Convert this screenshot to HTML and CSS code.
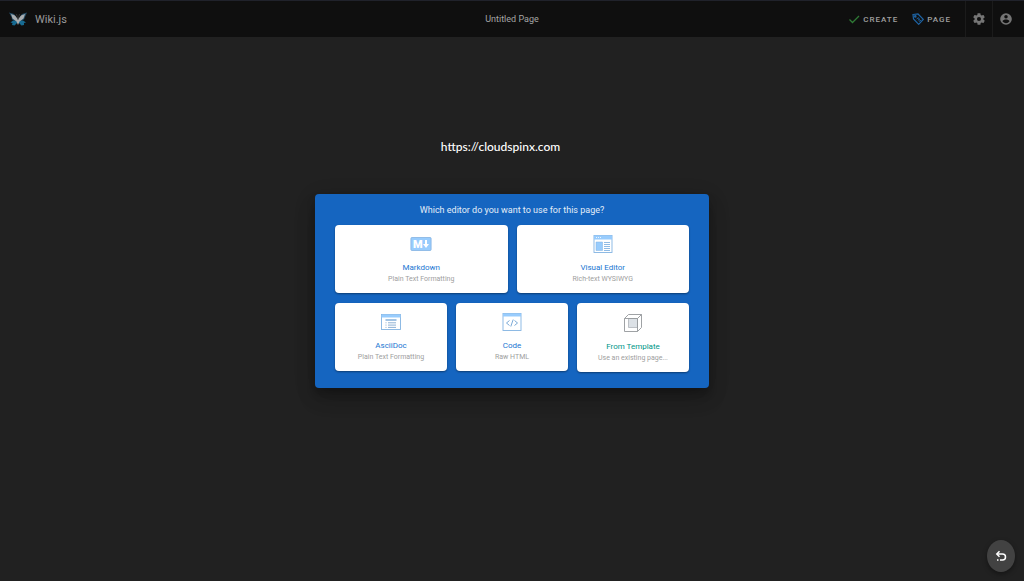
FILE: index.html
```
<!DOCTYPE html>
<html lang="en">
<head>
<meta charset="utf-8">
<meta name="viewport" content="width=device-width, initial-scale=1">
<title>Untitled Page | Wiki.js</title>
<link rel="stylesheet" href="styles.css">
</head>
<body>
<header class="topbar">
  <a class="brand" href="#">
    <svg class="brand-logo" viewBox="0 0 18 16" aria-hidden="true">
      <path fill="#176a91" d="M8.500 9 4 9.500 1.500 11.500 3.500 12 3 14 5.500 14.500 8 12zM9.500 9 14 9.500 17 11.500 15 12 15 14 12.500 14.500 10 12z"/>
      <path fill="#27506a" d="M0 1.500 5 3 8.500 8 7 10 3 8.500 2.500 6zM18 1.500 13 3 9.500 8 11 10 15 8.500 16 6z"/>
      <path fill="#a9adb0" d="M2 3 6 4.500 9 8.500 12 4.500 16 3 14.500 7.500 10.500 10.500 9 14 7.500 10.500 3.500 7.500z"/>
      <path fill="none" stroke="#555" stroke-width=".5" d="M9 9 7.500 3M9 9l1.500-6"/>
    </svg>
    <span>Wiki.js</span>
  </a>
  <h1 class="page-title">Untitled Page</h1>
  <nav class="actions" aria-label="Page actions">
    <button class="action" type="button">
      <svg class="icon-check" viewBox="0 0 12 12" aria-hidden="true"><path d="M1.500 6.500 4.500 9.500 11 3" fill="none" stroke="#2f7a36" stroke-width="1.300"/></svg>
      <span>Create</span>
    </button>
    <button class="action" type="button">
      <svg class="icon-tag" viewBox="0 0 12 12" fill="none" stroke="#1e64a5" stroke-width="1.200" aria-hidden="true"><path d="M1 1.500 6 1l5.300 5.300-4.600 5L1.500 6z"/><circle cx="3.300" cy="3.400" r=".7"/><path stroke-width=".9" d="m4.500 6.300 2-2M5.800 7.600l2.100-2M7 8.800l2-2M5.500 4.900l3 3"/></svg>
      <span>Page</span>
    </button>
    <button class="square square-first" type="button" aria-label="Administration">
      <svg class="icon-round" viewBox="0 0 24 24" fill="#757575" aria-hidden="true"><path d="M12 15.500A3.500 3.500 0 0 1 8.500 12 3.500 3.500 0 0 1 12 8.500a3.500 3.500 0 0 1 3.500 3.500 3.500 3.500 0 0 1-3.500 3.500m7.430-2.530c.04-.32.07-.64.07-.97s-.03-.66-.07-1l2.110-1.630c.19-.15.24-.42.12-.64l-2-3.460c-.12-.22-.39-.31-.61-.22l-2.490 1c-.52-.39-1.060-.73-1.690-.98l-.37-2.650A.506.506 0 0 0 14 2h-4c-.25 0-.46.18-.5.420l-.37 2.650c-.63.250-1.170.590-1.690.980l-2.490-1c-.22-.09-.49 0-.61.220l-2 3.460c-.13.220-.07.490.12.640L4.570 11c-.04.340-.07.670-.07 1s.03.650.07.970l-2.110 1.660c-.19.150-.25.420-.12.640l2 3.460c.12.220.39.300.61.220l2.490-1.010c.52.400 1.060.740 1.690.990l.37 2.650c.04.240.25.420.5.420h4c.25 0 .46-.18.5-.42l.37-2.650c.63-.26 1.170-.59 1.690-.99l2.490 1.010c.22.080.49 0 .61-.22l2-3.460c.12-.22.07-.49-.12-.64z"/></svg>
    </button>
    <button class="square" type="button" aria-label="Account">
      <svg class="icon-round" viewBox="0 0 24 24" fill="#757575" aria-hidden="true"><path d="M12 19.200c-2.500 0-4.710-1.280-6-3.200.03-2 4-3.100 6-3.100s5.970 1.100 6 3.100a7.232 7.232 0 0 1-6 3.200M12 5a3 3 0 0 1 3 3 3 3 0 0 1-3 3 3 3 0 0 1-3-3 3 3 0 0 1 3-3m0-3A10 10 0 0 0 2 12a10 10 0 0 0 10 10 10 10 0 0 0 10-10A10 10 0 0 0 12 2z"/></svg>
    </button>
  </nav>
</header>
<main class="stage">
  <p class="watermark">https://cloudspinx.com</p>
  <section class="dialog" role="dialog" aria-labelledby="dialog-title">
    <h2 class="dialog-title" id="dialog-title">Which editor do you want to use for this page?</h2>
    <div class="row">
      <button class="card" type="button">
        <svg class="card-icon" viewBox="0 0 22 20" aria-hidden="true"><rect x=".9" y="3.500" width="20.200" height="13" rx="1" fill="#98ccfd" stroke="#83b3e2" stroke-width=".8"/><text class="md-letter" x="3" y="14">M</text><path fill="#fff" d="M15 6h2v4h2l-3 4-3-4h2z"/></svg>
        <span class="card-name">Markdown</span>
        <span class="card-note">Plain Text Formatting</span>
      </button>
      <button class="card" type="button">
        <svg class="card-icon" viewBox="0 0 22 20" aria-hidden="true"><rect x="2" y="1.500" width="18" height="17" fill="#fff" stroke="#83b3e2" stroke-width=".9"/><path fill="#98ccfd" d="M2 1.500h18v4H2zM4 8h6.500v8.500H4z"/><path stroke="#fff" stroke-width=".8" d="M4 3.500h1M6 3.500h1M8 3.500h1"/><path stroke="#83b3e2" d="M12 8.500h6M12 10.500h6M12 12.500h6M12 14.500h6M12 16.500h6" stroke-width=".9"/><path stroke="#83b3e2" stroke-width=".5" fill="none" d="M4 8h6.500v8.500H4z"/></svg>
        <span class="card-name">Visual Editor</span>
        <span class="card-note">Rich-text WYSIWYG</span>
      </button>
    </div>
    <div class="row">
      <button class="card" type="button">
        <svg class="card-icon" viewBox="0 0 22 20" aria-hidden="true"><rect x="1.500" y="2.500" width="19" height="15" fill="#fff" stroke="#83b3e2" stroke-width=".9"/><path fill="#98ccfd" d="M1.500 2.500h19v3h-19z"/><path stroke="#4788c7" d="M5.500 8h11"/><path stroke="#83a9cf" stroke-width=".9" d="M5.500 10.800h1M8 10.800h8M5.500 13.100h1M8 13.100h8M5.500 15.400h1M8 15.400h8"/></svg>
        <span class="card-name">AsciiDoc</span>
        <span class="card-note">Plain Text Formatting</span>
      </button>
      <button class="card" type="button">
        <svg class="card-icon" viewBox="0 0 22 20" aria-hidden="true"><rect x="2" y="1.500" width="18" height="17" fill="#fff" stroke="#83b3e2" stroke-width=".9"/><path fill="#98ccfd" d="M2 1.500h18v3H2z"/><path fill="none" stroke="#6b9fd3" stroke-width=".9" d="M8.500 8.500 5.500 11l3 2.500M13.500 8.500l3 2.500-3 2.500M12.200 7.500l-2.400 7"/></svg>
        <span class="card-name">Code</span>
        <span class="card-note">Raw HTML</span>
      </button>
      <button class="card card-template" type="button">
        <svg class="card-icon" viewBox="0 0 22 20" aria-hidden="true"><g fill="#fff" stroke="#94979b" stroke-width=".9" stroke-linejoin="round"><path d="M2.500 5.500 6.500 1.500h13v13l-4 4h-13z"/><path fill="#dce1e6" stroke="#b6babf" d="M6.500 5.500h9v9h-9z"/><path fill="none" d="M2.500 5.500h13l4-4M15.500 5.500v13"/></g></svg>
        <span class="card-name">From Template</span>
        <span class="card-note">Use an existing page...</span>
      </button>
    </div>
  </section>
</main>
<button class="fab" type="button" aria-label="Go back">
  <svg class="fab-icon" viewBox="0 0 12 12" fill="none" stroke="#fff" stroke-width="1.500" aria-hidden="true"><path d="M2 4h5.500a3 3 0 0 1 0 6H5"/><path d="M4.500 1.300 1.800 4l2.700 2.700"/><path d="M2 10h1.500"/></svg>
</button>
</body>
</html>
```
FILE: styles.css
```
* {
  box-sizing: border-box;
}

body {
  display: flex;
  flex-direction: column;
  min-height: 100vh;
  margin: 0;
  background: #212121;
  color: #fff;
  font-family: Roboto, "Liberation Sans", sans-serif;
}

button {
  margin: 0;
  padding: 0;
  border: 0;
  background: none;
  color: inherit;
  font-family: inherit;
  cursor: pointer;
}

svg {
  display: block;
  flex: none;
}

.topbar {
  display: grid;
  grid-template-columns: 1fr auto 1fr;
  align-items: stretch;
  height: 37px;
  border-top: 1px solid #20222b;
  background: #0f0f0f;
}

.brand {
  display: flex;
  align-items: center;
  gap: 8px;
  padding-left: 9px;
  color: #9b9b9b;
  font-size: 11px;
  text-decoration: none;
}

.brand-logo {
  width: 18px;
  height: 16px;
}

.page-title {
  align-self: center;
  margin: 0;
  color: #a5a5a5;
  font-size: 9px;
  font-weight: 400;
}

.actions {
  display: flex;
  justify-content: flex-end;
}

.action {
  display: flex;
  align-items: center;
  gap: 3px;
  margin-right: 14px;
  color: #a0a0a0;
  font-size: 8px;
  font-weight: 500;
  letter-spacing: 1px;
  text-transform: uppercase;
}

.icon-check,
.icon-tag {
  width: 12px;
  height: 12px;
}

.square {
  display: grid;
  place-items: center;
  width: 32px;
  border-left: 1px solid #1b1b1b;
}

.square-first {
  width: 27px;
}

.icon-round {
  width: 14px;
  height: 14px;
}

.square:last-child {
  padding-right: 5px;
}

.stage {
  position: relative;
  display: grid;
  flex: 1;
  place-items: center;
  padding: 0 16px 36px;
}

.watermark {
  position: absolute;
  top: 102px;
  left: 0;
  right: 23px;
  margin: 0;
  font-family: Lato, sans-serif;
  font-size: 12px;
  font-weight: 500;
  line-height: 16px;
  text-align: center;
}

.dialog {
  display: grid;
  gap: 9px;
  width: 100%;
  max-width: 394px;
  padding: 11px 20px 16px;
  border-radius: 4px;
  background: #1565c0;
  box-shadow: 0 6px 8px rgba(0, 0, 0, .2), 0 12px 19px rgba(0, 0, 0, .14), 0 5px 23px rgba(0, 0, 0, .12);
}

.dialog-title {
  margin: 0;
  color: #e3edf8;
  font-size: 9px;
  font-weight: 400;
  line-height: 11px;
  text-align: center;
}

.row {
  display: flex;
  align-items: flex-start;
  gap: 9px;
}

.card {
  display: flex;
  flex: 1 1 0;
  flex-direction: column;
  align-items: center;
  padding: 9px 4px 8px;
  border-radius: 4px;
  background: #fff;
  box-shadow: 0 1px 2px rgba(0, 0, 0, .4);
}

.row + .row {
  padding-top: 1px;
}

.card-icon {
  width: 22px;
  height: 20px;
  margin-bottom: 8px;
}

.card-name {
  color: #1976d2;
  font-size: 8px;
  line-height: 12px;
}

.card-note {
  color: #9e9e9e;
  font-size: 7px;
  line-height: 11px;
}

.card-template {
  padding-top: 10px;
}

.card-template .card-name {
  color: #009688;
}

.md-letter {
  fill: #fff;
  font-family: Roboto, sans-serif;
  font-size: 11px;
  font-weight: 900;
}

.fab {
  position: fixed;
  right: 9px;
  bottom: 9px;
  display: grid;
  place-items: center;
  width: 28px;
  height: 32px;
  border-radius: 50%;
  background: #424242;
  box-shadow: 0 2px 5px rgba(0, 0, 0, .4);
}

.fab-icon {
  width: 12px;
  height: 12px;
}
```
